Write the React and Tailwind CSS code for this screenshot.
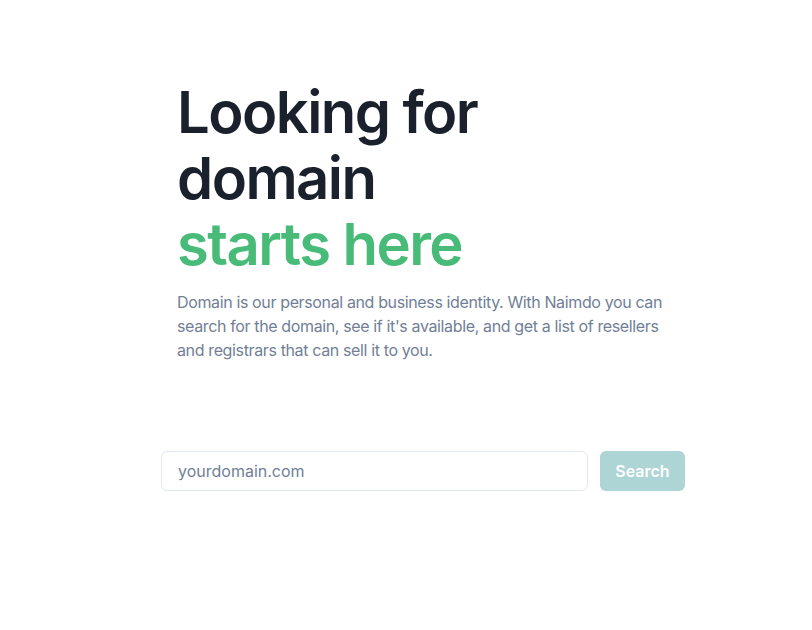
export default function App() {
  return (
    <div
      className="min-h-screen bg-white"
      style={{ fontFamily: "Inter, 'Noto Sans', sans-serif" }}
    >
      <div className="pt-[79px] pl-[177px]">
        <div className="w-[500px]">
          <h1 className="text-[58px] leading-[66px] font-semibold tracking-[-0.027em] text-[#1A202C]">
            Looking for domain
            <br />
            <span className="text-[#48BB78]">starts here</span>
          </h1>
          <p className="mt-[13px] text-base leading-6 tracking-[-0.023em] text-[#718096]">
            Domain is our personal and business identity. With Naimdo you can
            search for the domain, see if it's available, and get a list of
            resellers and registrars that can sell it to you.
          </p>
        </div>
      </div>

      <form
        onSubmit={(e) => e.preventDefault()}
        className="mt-[89px] ml-[161px] flex w-[524px] gap-3"
      >
        <input
          type="text"
          placeholder="yourdomain.com"
          className="h-10 flex-1 rounded-md border border-[#E2E8F0] px-4 text-base text-[#1A202C] placeholder:text-[#718096] outline-none"
        />
        <button
          type="submit"
          disabled
          className="h-10 w-[85px] rounded-md bg-[#ADD5D5] text-base font-semibold text-white"
        >
          Search
        </button>
      </form>
    </div>
  );
}
